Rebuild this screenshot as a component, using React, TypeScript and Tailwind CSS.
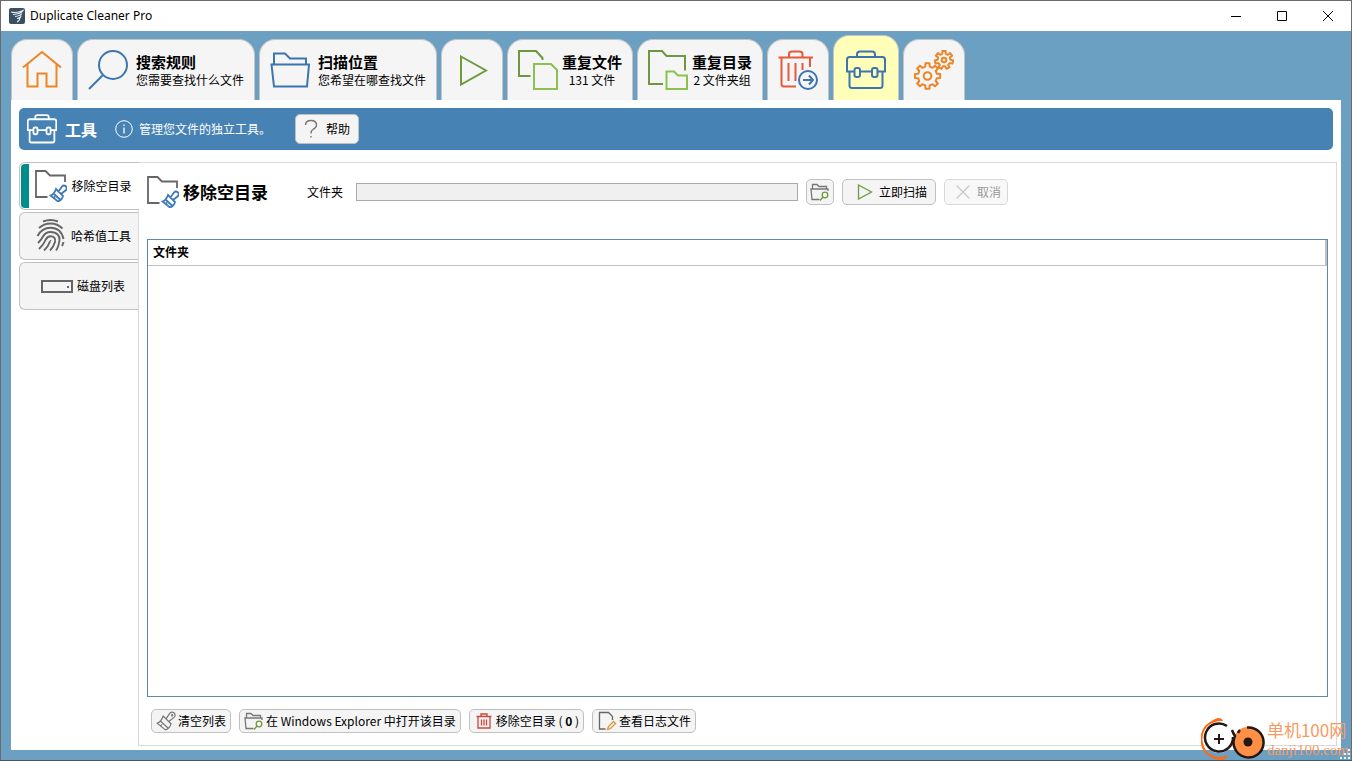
import type { ReactNode } from "react";

const BLUE = "#3d75b0";

function gearPath(cx: number, cy: number, teeth: number, root: number, tip: number) {
  const step = (Math.PI * 2) / teeth;
  const at = (a: number, r: number) =>
    `${(cx + Math.cos(a) * r).toFixed(2)} ${(cy + Math.sin(a) * r).toFixed(2)}`;
  const points: string[] = [];
  for (let i = 0; i < teeth; i++) {
    const a = i * step - Math.PI / 2;
    points.push(at(a - step * 0.3, root), at(a - step * 0.2, tip), at(a + step * 0.2, tip), at(a + step * 0.3, root));
  }
  return `M${points.join("L")}Z`;
}

function TabSvg({ color, children }: { color: string; children: ReactNode }) {
  return (
    <svg className="size-10 shrink-0" viewBox="0 0 40 40" fill="none" stroke={color} strokeWidth={2} aria-hidden="true">
      {children}
    </svg>
  );
}

function HomeIcon() {
  return (
    <TabSvg color="#ec8526">
      <path d="M1 17.5L20 2L39 17.5" />
      <path d="M5.5 14V36.5H15.5V23.5H24.5V36.5H34.5V14" />
    </TabSvg>
  );
}

function SearchIcon() {
  return (
    <TabSvg color={BLUE}>
      <circle cx="25" cy="15" r="14" />
      <path d="M15 25L1 39" />
    </TabSvg>
  );
}

function FolderOpenIcon() {
  return (
    <TabSvg color={BLUE}>
      <path d="M4 14V3.5H15L20 8.5H36V14" />
      <path d="M1.5 14.5H39L37 36.5H4Z" />
    </TabSvg>
  );
}

function PlayTabIcon() {
  return (
    <TabSvg color="#6f9a3e">
      <path d="M9 6.5L34 20.5L9 34.5Z" />
    </TabSvg>
  );
}

function FilesIcon() {
  return (
    <TabSvg color="#6f9641">
      <path d="M12.500 26H1V1H18L24.500 8V10" />
      <path d="M16 14H33L39 20V39H16Z" stroke="#8cc152" />
    </TabSvg>
  );
}

function FoldersIcon() {
  return (
    <TabSvg color="#6f9641">
      <path d="M15 34H1V1H14L18.500 6H37V20.500" />
      <path d="M18.500 21.500H26L30 25.500H39V39H18.500Z" stroke="#8cc152" />
    </TabSvg>
  );
}

function TrashMoveIcon() {
  return (
    <TabSvg color="#e8593c">
      <path d="M0.500 7.500H35M11 7V4Q11 1.500 14 1.500H21.500Q24.500 1.500 24.500 4V7" />
      <path d="M3.500 8V34Q3.500 36.500 6 36.500H18M32 8V17M10.500 13V31M17.500 13V31M24.500 13V20" />
      <g stroke={BLUE}>
        <circle cx="30" cy="30" r="9" />
        <path d="M25 30H35M31 25.500L35 30L31 34.500" />
      </g>
    </TabSvg>
  );
}

function BriefcaseIcon({ className, color, width = 2 }: { className: string; color: string; width?: number }) {
  return (
    <svg className={className} viewBox="0 0 40 40" fill="none" stroke={color} strokeWidth={width} aria-hidden="true">
      <path d="M11 7V4.500Q11 1.500 14 1.500H26Q29 1.500 29 4.500V7" />
      <path d="M8 21.500H1V9.500Q1 7 3.500 7H36.500Q39 7 39 9.500V21.500H32M14 21.500H26" />
      <path d="M3.500 21.500V35.500Q3.500 38 6 38H34Q36.500 38 36.500 35.500V21.500" />
      <rect x="8.500" y="18" width="5.500" height="9" rx="2" />
      <rect x="26" y="18" width="5.500" height="9" rx="2" />
    </svg>
  );
}

function GearsIcon() {
  return (
    <TabSvg color="#ec8526">
      <path d={gearPath(13.5, 26, 8, 9.6, 12.8)} strokeLinejoin="round" />
      <circle cx="13.500" cy="26" r="3.800" />
      <path d={gearPath(30, 10, 7, 6.4, 9.2)} strokeLinejoin="round" />
      <circle cx="30" cy="10" r="2.300" />
    </TabSvg>
  );
}

const BRUSH = "M15.500 25.500Q19 24.500 21 19L28 26Q27 30 23 31.500ZM23.500 21.500L27 16.500A2.500 2.500 0 0 1 31 20L26 24M18.500 23.500L25.500 30M18.500 28L20 26.500";

function FolderBrushIcon() {
  return (
    <svg className="size-8 shrink-0" viewBox="0 0 32 32" fill="none" strokeWidth={1.8} aria-hidden="true">
      <path d="M12.500 27H1V1H10.500L15 5.500H30V12" stroke="#666" />
      <path d={BRUSH} stroke="#3f7ab8" />
    </svg>
  );
}

function BrushIcon() {
  return (
    <svg className="size-5 shrink-0" viewBox="14.500 14.500 18 18" fill="none" stroke="#777" strokeWidth={1.1} aria-hidden="true">
      <path d={BRUSH} />
      <circle cx="29" cy="18.300" r="0.500" />
    </svg>
  );
}

function FingerprintIcon() {
  return (
    <svg className="h-9 w-8 shrink-0" viewBox="-1 0 32 36" fill="none" stroke="#666" strokeWidth={1.9} aria-hidden="true">
      <path d="M7 3.500Q14.500 0.500 22 3.500" />
      <path d="M3 10Q8 5.500 14.500 5.500Q21.500 5.500 26.500 10.500" />
      <path d="M1.500 18Q6 9.800 14.500 9.800Q25 9.800 27.500 21" />
      <path d="M2 25Q5.500 21.500 7 18.500Q9.500 14 14.500 14C21 14 24 18 23.500 22C23 26 22.500 29 20 32.500" />
      <path d="M3 31Q7.500 27 9.500 22Q11.500 18.300 14.500 18.300C18 18.300 20 20.500 19 24Q17.500 29 14 32.500" />
      <path d="M8 32.500Q12 29 13.500 24.500Q14.500 22.500 15 23" />
      <path d="M27.500 24Q27 26 26 28" />
    </svg>
  );
}

function DriveIcon() {
  return (
    <svg className="size-8 shrink-0" viewBox="0 0 32 32" fill="none" aria-hidden="true">
      <rect x="1" y="11" width="30" height="11" stroke="#666" strokeWidth={2} />
      <rect x="26" y="16" width="2" height="2" fill="#666" />
    </svg>
  );
}

function FolderSearchIcon() {
  return (
    <svg className="size-5 shrink-0" viewBox="0 0 20 20" fill="none" stroke="#777" strokeWidth={1.3} aria-hidden="true">
      <path d="M2.500 7V2.500H7L9 4.500H16.500V7" />
      <path d="M9.500 17.500H2L1 7H18V9" />
      <circle cx="15" cy="13" r="2.800" stroke="#6f9a3e" />
      <path d="M13 15L10 18.500" stroke="#6f9a3e" />
    </svg>
  );
}

function PlayIcon() {
  return (
    <svg className="size-4 shrink-0" viewBox="0 0 16 16" fill="none" stroke="#6f9a3e" strokeWidth={1.3} aria-hidden="true">
      <path d="M1.500 1L14.500 8L1.500 15Z" />
    </svg>
  );
}

function CancelIcon() {
  return (
    <svg className="size-4 shrink-0" viewBox="0 0 16 16" stroke="#c8c8c8" strokeWidth={1.2} aria-hidden="true">
      <path d="M1.500 1.500L14.500 14.500M14.500 1.500L1.500 14.500" />
    </svg>
  );
}

function TrashIcon() {
  return (
    <svg className="size-4 shrink-0" viewBox="0 0 16 16" fill="none" stroke="#c8483c" strokeWidth={1.3} aria-hidden="true">
      <path d="M0.500 3.500H15.500M5 3V1H11V3M2 4V15H14V4M5.500 6.500V12.500M8 6.500V12.500M10.500 6.500V12.500" />
    </svg>
  );
}

function LogIcon() {
  return (
    <svg className="size-5 shrink-0" viewBox="0 0 20 20" fill="none" stroke="#666" strokeWidth={1.3} aria-hidden="true">
      <path d="M8.500 18H2.500V1.500H11.500L15.500 5.500V9" />
      <path d="M10.500 18.500L11.500 15.500L16.500 10.500L18.500 12.500L13.500 17.500Z" stroke="#d9963c" />
    </svg>
  );
}

function Tab({ icon, title, note, wide, active, label }: {
  icon: ReactNode; title?: string; note?: string; wide?: boolean; active?: boolean; label?: string;
}) {
  return (
    <button
      type="button"
      aria-label={label}
      className={`flex items-center rounded-t-2xl border border-b-0 border-[#c4c4c4] ${
        active ? "h-[65px] bg-[#ffffba] px-3 pt-1" : "h-[61px] bg-[#f5f5f5] px-2.5"
      } ${wide ? "gap-2 text-left" : "gap-1 text-center"}`}
    >
      {icon}
      {title && (
        <span className="flex flex-col whitespace-nowrap">
          <span className="text-[15px] leading-5 font-bold">{title}</span>
          <span className="text-xs leading-4">{note}</span>
        </span>
      )}
    </button>
  );
}

function SideTab({ icon, label, active }: { icon: ReactNode; label: string; active?: boolean }) {
  return (
    <button
      type="button"
      className={`flex h-12 items-stretch rounded-l-md border border-r-0 border-[#c0c0c0] p-px ${
        active ? "relative -mr-px bg-white" : "bg-[#f4f4f4]"
      }`}
    >
      <span className={`w-2 rounded-l-sm ${active ? "bg-[#008c8a]" : ""}`} />
      <span className="flex flex-1 items-center justify-center gap-1 whitespace-nowrap">
        {icon}
        {label}
      </span>
    </button>
  );
}

const BUTTON = "flex items-center whitespace-nowrap rounded-[5px] border border-[#c0c0c0] bg-[#f4f4f4]";

function Watermark() {
  return (
    <div className="pointer-events-none absolute right-0 bottom-0 flex h-11 items-center gap-0.5 pr-0.5">
      <svg className="h-11 w-16" viewBox="0 0 64 44" fill="none" aria-hidden="true">
        <path d="M18 5Q1 8 1.500 25Q3 37 13 40Q19 43 27 39Q25 45 18 44Q6 42 1 32Q-3 17 5 9Q10 5 14 3Q20 0 22 5Z" fill="#ff6a13" />
        <circle cx="18" cy="23" r="14" fill="#fff" />
        <path d="M26 10A14 14 0 1 0 32 21" stroke="#231815" strokeWidth={2.5} />
        <path d="M18 18V28M13 23H23" stroke="#231815" strokeWidth={2} />
        <circle cx="47" cy="26" r="15" fill="#ff8f44" />
        <path d="M46 11.500A15 15 0 1 1 34 20Q32 17 31 14M37 17Q38 15 39 14" stroke="#231815" strokeWidth={2.500} />
        <circle cx="47" cy="26" r="4.500" fill="#231815" />
      </svg>
      <div className="flex flex-col text-[#f79a62]">
        <span className="text-[17px] leading-6">单机100网</span>
        <span className="font-['Liberation_Serif','Noto_Sans_CJK_SC',serif] text-[15px] leading-4">danji100.com</span>
      </div>
    </div>
  );
}

export default function App() {
  return (
    <div className="relative flex min-h-screen flex-col border border-[#6b6b6b] border-b-[#46545c] bg-[#6ca0c3] font-['Noto_Sans_CJK_SC',sans-serif] text-xs text-black">
      <header className="flex h-[30px] items-center bg-white pl-2">
        <svg className="size-4" viewBox="0 0 16 16" fill="none" aria-hidden="true">
          <rect width="16" height="16" rx="2" fill="#3b4f63" />
          <path d="M2 4Q8 5.500 14 2.500Q12 6 4 6.500M13 5.500Q11 8 6 8.500M12 7.500Q12 10 8 10.500M11 10Q10.500 13 8 14" stroke="#e8edf2" strokeWidth={1.2} />
        </svg>
        <h1 className="ml-1 flex-1 pl-px font-['Noto_Sans',sans-serif]">Duplicate Cleaner Pro</h1>
        <div className="flex h-full">
          <button type="button" aria-label="最小化" className="flex w-[46px] items-center justify-center">
            <svg className="size-2.5" viewBox="0 0 10 10" stroke="#000" aria-hidden="true"><path d="M0 5.500H10" /></svg>
          </button>
          <button type="button" aria-label="最大化" className="flex w-[46px] items-center justify-center">
            <svg className="size-2.5" viewBox="0 0 10 10" fill="none" stroke="#000" aria-hidden="true"><path d="M0.500 0.500H9.500V9.500H0.500Z" /></svg>
          </button>
          <button type="button" aria-label="关闭" className="flex w-[46px] items-center justify-center">
            <svg className="size-2.5" viewBox="0 0 10 10" stroke="#000" aria-hidden="true"><path d="M0 0L10 10M10 0L0 10" /></svg>
          </button>
        </div>
      </header>

      <nav className="flex items-end gap-1 px-2.5 pt-1">
        <Tab icon={<HomeIcon />} label="主页" />
        <Tab icon={<SearchIcon />} title="搜索规则" note="您需要查找什么文件" wide />
        <Tab icon={<FolderOpenIcon />} title="扫描位置" note="您希望在哪查找文件" wide />
        <Tab icon={<PlayTabIcon />} label="开始扫描" />
        <Tab icon={<FilesIcon />} title="重复文件" note="131 文件" />
        <Tab icon={<FoldersIcon />} title="重复目录" note="2 文件夹组" />
        <Tab icon={<TrashMoveIcon />} label="移除文件" />
        <Tab icon={<BriefcaseIcon className="size-10 shrink-0" color={BLUE} />} label="工具" active />
        <Tab icon={<GearsIcon />} label="设置" />
      </nav>

      <main className="mx-2.5 mb-2.5 flex flex-1 flex-col bg-white pt-2 pr-1 pb-1 pl-2">
        <section className="mr-1 flex h-[42px] items-center rounded-[5px] bg-[#4682b4] pl-2 text-white">
          <BriefcaseIcon className="size-[30px]" color="#fff" width={2.4} />
          <h2 className="ml-2 text-base font-bold">工具</h2>
          <svg className="ml-[18px] size-[18px]" viewBox="0 0 18 18" fill="none" stroke="#fff" aria-hidden="true">
            <circle cx="9" cy="9" r="8.300" />
            <path d="M9 4.500V6M9 7.500V13.500" strokeWidth={1.3} />
          </svg>
          <p className="ml-1.5">管理您文件的独立工具。</p>
          <button type="button" className={`${BUTTON} ml-6 h-[30px] gap-2 px-2 text-black`}>
            <svg className="h-5 w-3.5" viewBox="0 0 14 20" fill="none" stroke="#777" strokeWidth={1.4} aria-hidden="true">
              <path d="M1.500 6Q1.500 1.500 7 1.500Q12.500 1.500 12.500 6Q12.500 8.500 9.500 10Q7 11.500 7 14.500M7 17V18.500" />
            </svg>
            帮助
          </button>
        </section>

        <div className="mt-3 flex flex-1">
          <aside className="flex w-[119px] flex-col gap-0.5">
            <SideTab icon={<FolderBrushIcon />} label="移除空目录" active />
            <SideTab icon={<FingerprintIcon />} label="哈希值工具" />
            <SideTab icon={<DriveIcon />} label="磁盘列表" />
          </aside>

          <section className="flex flex-1 flex-col border border-[#dadada] px-2">
            <div className="mt-3 flex h-[34px] items-center">
              <FolderBrushIcon />
              <h3 className="ml-1 text-[17px] leading-6 font-bold">移除空目录</h3>
              <label htmlFor="folder" className="ml-[39px]">文件夹</label>
              <input id="folder" type="text" readOnly className="ml-[13px] h-[18px] w-[442px] border border-[#a8a8b0] bg-[#f0f0f0] px-1" />
              <button type="button" aria-label="浏览文件夹" className={`${BUTTON} ml-2 h-[26px] w-7 justify-center`}>
                <FolderSearchIcon />
              </button>
              <button type="button" className={`${BUTTON} ml-2 h-[26px] gap-1.5 pr-2 pl-3.5`}>
                <PlayIcon />
                立即扫描
              </button>
              <button type="button" disabled className="ml-2 flex h-[26px] items-center gap-1.5 rounded-[5px] border border-[#d8d8d8] bg-[#f8f8f8] pr-1.5 pl-2.5 whitespace-nowrap text-[#999]">
                <CancelIcon />
                取消
              </button>
            </div>

            <div className="mt-[30px] flex-1 border border-[#5f88b0]">
              <table className="w-full border-collapse">
                <thead>
                  <tr>
                    <th scope="col" className="h-[25px] border-r-2 border-b border-[#c0c0c0] p-0 pl-[5px] text-left font-bold">文件夹</th>
                  </tr>
                </thead>
                <tbody />
              </table>
            </div>

            <div className="my-3 flex gap-2 pl-1">
              <button type="button" className={`${BUTTON} h-6 gap-0.5 px-1`}>
                <BrushIcon />
                清空列表
              </button>
              <button type="button" className={`${BUTTON} h-6 gap-0.5 px-1`}>
                <FolderSearchIcon />
                <span>在 Windows Explorer 中打开该目录</span>
              </button>
              <button type="button" className={`${BUTTON} h-6 gap-1 pr-1 pl-1.5`}>
                <TrashIcon />
                <span>移除空目录 ( <b>0</b> )</span>
              </button>
              <button type="button" className={`${BUTTON} h-6 gap-0.5 px-1`}>
                <LogIcon />
                查看日志文件
              </button>
            </div>
          </section>
        </div>
      </main>
      <Watermark />
      <svg className="pointer-events-none absolute right-0 bottom-0 size-3" viewBox="0 0 12 12" fill="#f0f0f0" aria-hidden="true">
        <path d="M9 1h2v2h-2zM5 5h2v2h-2zM9 5h2v2h-2zM1 9h2v2h-2zM5 9h2v2h-2zM9 9h2v2h-2z" />
      </svg>
    </div>
  );
}
